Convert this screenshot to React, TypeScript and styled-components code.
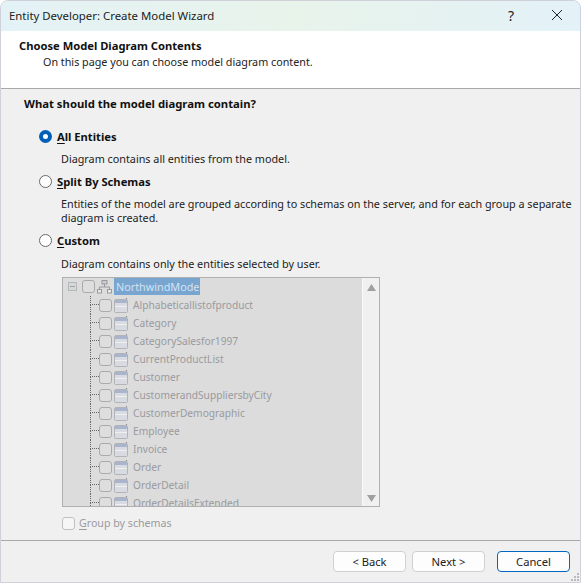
import React from "react";
import styled, { createGlobalStyle } from "styled-components";

const Global = createGlobalStyle`
  html, body { margin: 0; padding: 0; background: #fff; }
  body { font-family: "Noto Sans", "Open Sans", sans-serif; font-size: 11px; color: #111; }
`;

const Window = styled.div`
  width: 581px; height: 583px; box-sizing: border-box; display: flex; flex-direction: column;
  border: 1px solid #cfd0da; border-radius: 8px 8px 0 0; overflow: hidden; background: #f0f0f0; position: relative;
`;
const TitleBar = styled.div`
  height: 30px; flex: none; display: flex; align-items: center; padding-left: 8px;
  background: linear-gradient(90deg, #e3f2f6 0%, #e8f3ea 50%, #e3f2f8 100%);
`;
const TitleText = styled.span`
  flex: 1; font: 11.4px "Noto Sans", sans-serif; color: #222; margin-top: -1px;
`;
const TitleButton = styled.span`
  width: 46px; height: 30px; display: flex; align-items: center; justify-content: center; color: #222; font-size: 14px; margin-top: -2px;
`;
const Header = styled.div`
  height: 58px; flex: none; box-sizing: border-box; background: #fff; padding: 7px 0 0 18px; border-bottom: 1px solid #a8a8a8;
`;
const HeaderTitle = styled.div`font-weight: 700; font-size: 11.2px; line-height: 15px; color: #111;`;
const HeaderSub = styled.div`font-size: 10.75px; line-height: 16px; padding-left: 24px; color: #222; margin-top: 1px;`;
const Body = styled.div`
  flex: 1; padding: 7px 0 0 23px; display: flex; flex-direction: column; min-height: 0;
`;
const Question = styled.div`font-weight: 700; font-size: 11.3px; line-height: 16px; margin-bottom: 16px;`;
const RadioRow = styled.div`display: flex; align-items: center; gap: 5px; height: 16px; padding-left: 15px;`;
const RadioDot = styled.span<{ $on?: boolean }>`
  width: 13px; height: 13px; border-radius: 50%; flex: none; background: #fff; box-sizing: border-box;
  border: ${p => (p.$on ? "4px solid #0060b8" : "1px solid #6a6a6a")};
`;
const RadioLabel = styled.span`
  font-weight: 700; font-size: 11.2px; color: #111;
  u { text-underline-offset: 2px; }
`;
const Description = styled.div<{ $gap: number; $top?: number }>`
  padding: ${p => p.$top ?? 8}px 0 0 37px; margin-bottom: ${p => p.$gap}px; line-height: 14px; font-size: 10.8px; color: #222; white-space: nowrap;
`;
const Tree = styled.div`
  margin: 6px 0 0 38px; width: 318px; height: 230px; box-sizing: border-box; flex: none; display: flex;
  border: 1px solid #b0b0b0; background: #dcdcdc; overflow: hidden;
`;
const TreeList = styled.div`flex: 1; overflow: hidden; position: relative;`;
const Row = styled.div`
  height: 18px; display: flex; align-items: center; padding-left: 36px; color: #9a9a9f; font-size: 10.2px; white-space: nowrap;
  position: relative;
`;
const RootRow = styled.div`
  height: 17px; margin-bottom: 1px; display: flex; align-items: center; padding-left: 5px; color: #9a9a9f; white-space: nowrap;
`;
const Expander = styled.span`
  width: 9px; height: 9px; border: 1px solid #b4b8b8; flex: none; position: relative; box-sizing: border-box; margin-right: 5px;
  background: #d4d8d8;
  &::after { content: ""; position: absolute; left: 1px; right: 1px; top: 3px; height: 1px; background: #a0a4a4; }
`;
const Check = styled.span`
  width: 13px; height: 13px; border: 1px solid #aaa; border-radius: 3px; box-sizing: border-box; flex: none; background: #dedede;
`;
const Connector = styled.span`
  position: absolute; left: 27px; top: 0; width: 9px; height: 9px; border-bottom: 1px dotted #666; border-left: 1px dotted #666; box-sizing: border-box;
`;
const Continuation = styled.span`
  position: absolute; left: 27px; top: 9px; bottom: 0; border-left: 1px dotted #666;
`;
const NodeLabel = styled.span`
  margin-left: 4px; line-height: 17px;
`;
const RootLabel = styled.span`
  margin-left: 2px; line-height: 17px; padding: 0 1px 0 2px; font-size: 10.8px; background: #78a6d0; color: #d4e2f0;
`;
const IconSlot = styled.svg`flex: none; margin-left: 2px;`;
const ScrollBar = styled.div`
  width: 17px; flex: none; background: #f0f0f0; border-left: 1px solid #fafafa; display: flex; flex-direction: column; justify-content: space-between; align-items: center; padding: 6px 0 4px; box-sizing: border-box;
`;
const GroupRow = styled.div`
  display: flex; align-items: center; gap: 4px; margin: 8px 0 0 38px; color: #9a9a9f; font-size: 10.65px; height: 16px;
  u { text-underline-offset: 2px; }
`;
const GroupCheck = styled.span`
  width: 13px; height: 13px; border: 1px solid #c0c0c0; border-radius: 3px; box-sizing: border-box; background: #f6f6f6;
`;
const Footer = styled.div`
  height: 42px; flex: none; box-sizing: border-box; border-top: 1px solid #a8a8a8; display: flex; align-items: center; padding: 0 10px 0 332px; gap: 6px;
`;
const Btn = styled.button<{ $primary?: boolean; $ml?: number }>`
  width: 73px; height: 21px; padding: 0; background: #fdfdfd; border-radius: 4px; font: 11.2px "Noto Sans", sans-serif; color: #222;
  border: 1px solid ${p => (p.$primary ? "#0067c0" : "#d0d0d0")};
  margin-left: ${p => p.$ml ?? 0}px;
`;
const Grip = styled.svg`position: absolute; right: 0; bottom: 0;`;

const items = ["Alphabeticallistofproduct","Category","CategorySalesfor1997","CurrentProductList","Customer","CustomerandSuppliersbyCity","CustomerDemographic","Employee","Invoice","Order","OrderDetail","OrderDetailsExtended"];

const TableIcon = () => (
  <IconSlot width="15" height="15" viewBox="0 0 15 15">
    <rect x="0.5" y="1.5" width="13" height="13" rx="1" fill="#d8dce2" stroke="#b0b4b8" />
    <rect x="1" y="2" width="12" height="3" fill="#aab4cc" />
    <rect x="1" y="8" width="12" height="1" fill="#f0f0f0" />
    <rect x="12" y="0" width="1" height="1" fill="#888" />
  </IconSlot>
);
const ModelIcon = () => (
  <IconSlot width="15" height="15" viewBox="0 0 15 15" fill="none" stroke="#9a9a9a">
    <rect x="5" y="1.5" width="5" height="3.5" fill="#c8ccd8" />
    <path d="M7.5 5v3M2.5 10V8h10v2" />
    <rect x="0.5" y="10.5" width="4" height="3.5" fill="#e8e8e8" />
    <rect x="10.5" y="10.5" width="4" height="3.5" fill="#e8e8e8" />
  </IconSlot>
);

export default function App() {
  return (
    <Window>
      <Global />
      <TitleBar>
        <TitleText>Entity Developer: Create Model Wizard</TitleText>
        <TitleButton>?</TitleButton>
        <TitleButton>
          <svg width="12" height="12" viewBox="0 0 12 12" stroke="#222" strokeWidth="1"><path d="M1 1l10 10M11 1L1 11" /></svg>
        </TitleButton>
      </TitleBar>
      <Header>
        <HeaderTitle>Choose Model Diagram Contents</HeaderTitle>
        <HeaderSub>On this page you can choose model diagram content.</HeaderSub>
      </Header>
      <Body>
        <Question>What should the model diagram contain?</Question>
        <RadioRow><RadioDot $on /><RadioLabel><u>A</u>ll Entities</RadioLabel></RadioRow>
        <Description $gap={7}>Diagram contains all entities from the model.</Description>
        <RadioRow><RadioDot /><RadioLabel><u>S</u>plit By Schemas</RadioLabel></RadioRow>
        <Description $gap={7}>Entities of the model are grouped according to schemas on the server, and for each group a separate<br />diagram is created.</Description>
        <RadioRow><RadioDot /><RadioLabel><u>C</u>ustom</RadioLabel></RadioRow>
        <Description $gap={0} $top={9}>Diagram contains only the entities selected by user.</Description>
        <Tree>
          <TreeList>
            <RootRow><Expander /><Check /><ModelIcon /><RootLabel>NorthwindMode</RootLabel></RootRow>
            {items.map(name => (
              <Row key={name}><Connector /><Continuation /><Check /><TableIcon /><NodeLabel>{name}</NodeLabel></Row>
            ))}
          </TreeList>
          <ScrollBar>
            <svg width="9" height="7" viewBox="0 0 9 7"><path d="M4.5 0L9 7H0z" fill="#a0a0a0" /></svg>
            <svg width="9" height="7" viewBox="0 0 9 7"><path d="M4.5 7L9 0H0z" fill="#a0a0a0" /></svg>
          </ScrollBar>
        </Tree>
        <GroupRow><GroupCheck /><span><u>G</u>roup by schemas</span></GroupRow>
      </Body>
      <Footer>
        <Btn>&lt; Back</Btn>
        <Btn>Next &gt;</Btn>
        <Btn $primary $ml={6}>Cancel</Btn>
      </Footer>
      <Grip width="9" height="9" viewBox="0 0 9 9" fill="#bbb">
        <rect x="6" y="0" width="2" height="2" /><rect x="3" y="3" width="2" height="2" /><rect x="6" y="3" width="2" height="2" />
        <rect x="0" y="6" width="2" height="2" /><rect x="3" y="6" width="2" height="2" /><rect x="6" y="6" width="2" height="2" />
      </Grip>
    </Window>
  );
}
